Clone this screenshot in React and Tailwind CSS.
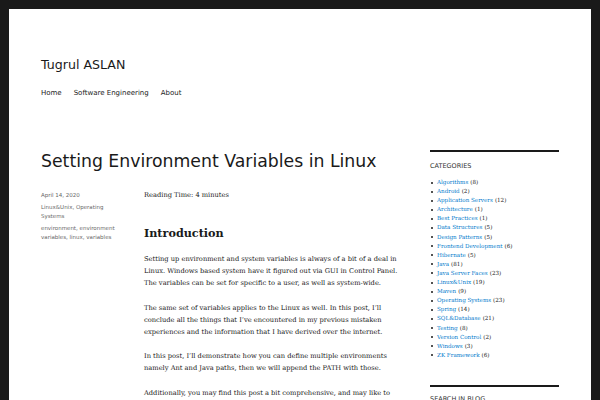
import React from 'react';

const categories = [
  ['Algorithms', 8],
  ['Android', 2],
  ['Application Servers', 12],
  ['Architecture', 1],
  ['Best Practices', 1],
  ['Data Structures', 5],
  ['Design Patterns', 5],
  ['Frontend Development', 6],
  ['Hibernate', 5],
  ['Java', 81],
  ['Java Server Faces', 23],
  ['Linux&Unix', 19],
  ['Maven', 9],
  ['Operating Systems', 23],
  ['Spring', 14],
  ['SQL&Database', 21],
  ['Testing', 8],
  ['Version Control', 2],
  ['Windows', 3],
  ['ZK Framework', 6],
];

// lines kept as in the original wrap
const paragraphs = [
  [
    'Setting up environment and system variables is always of a bit of a deal in',
    'Linux. Windows based system have it figured out via GUI in Control Panel.',
    'The variables can be set for specific to a user, as well as system-wide.',
  ],
  [
    'The same set of variables applies to the Linux as well. In this post, I\u2019ll',
    'conclude all the things that I\u2019ve encountered in my previous mistaken',
    'experiences and the information that I have derived over the internet.',
  ],
  [
    'In this post, I\u2019ll demonstrate how you can define multiple environments',
    'namely Ant and Java paths, then we will append the PATH with those.',
  ],
  ['Additionally, you may find this post a bit comprehensive, and may like to'],
];

const sans = "font-['DejaVu_Sans',sans-serif]";
const serif = "font-['DejaVu_Serif',serif]";

export default function App() {
  return (
    <div className="w-[600px] h-[400px] overflow-hidden bg-[#1a1a1a] pt-[9px] px-[9px]">
      <div className="bg-white h-[391px] px-[32px] overflow-hidden text-[#1a1a1a]">
        {/* Header */}
        <header className="pt-[46px]">
          <p className={`${sans} text-[12.6px] leading-[20px]`}>Tugrul ASLAN</p>
          <nav className={`${sans} mt-[12px] flex gap-[12px] text-[7px] leading-[12px]`}>
            <a>Home</a>
            <a>Software Engineering</a>
            <a>About</a>
          </nav>
        </header>

        <div className="flex mt-[51px]">
          {/* Post */}
          <main className="w-[362px]">
            <h1 className={`${sans} text-[17.3px] leading-[22px] whitespace-nowrap`}>
              Setting Environment Variables in Linux
            </h1>
            <div className="flex mt-[17px]">
              <div className={`${sans} w-[103px] pt-[1.5px] text-[5.5px] leading-[9px] text-[#686868]`}>
                <p className="mb-[3px]">April 14, 2020</p>
                <p className="mb-[3px] pr-[20px]">Linux&amp;Unix, Operating Systems</p>
                <p className="pr-[20px]">environment, environment variables, linux, variables</p>
              </div>
              <div className={`${serif} flex-1 text-[6.7px] leading-[12.2px] whitespace-nowrap text-[#1a1a1a]`}>
                <p className="leading-[12px]">Reading Time: 4 minutes</p>
                <h2 className="mt-[24px] text-[11.2px] leading-[16px] font-bold">Introduction</h2>
                <div className="mt-[12px] flex flex-col gap-[12px]">
                  {paragraphs.map((lines, i) => (
                    <p key={i}>
                      {lines.map((l, j) => (
                        <span key={j} className="block">{l}</span>
                      ))}
                    </p>
                  ))}
                </div>
              </div>
            </div>
          </main>

          {/* Sidebar */}
          <aside className="w-[129px] ml-auto">
            <section className="border-t-[2px] border-[#1a1a1a]">
              <h2 className={`${sans} mt-[9px] text-[6.5px] leading-[10px] uppercase text-[#333]`}>Categories</h2>
              <ul className={`${serif} mt-[7px] text-[5.6px] leading-[9.1px]`}>
                {categories.map(([name, n]) => (
                  <li key={name} className="flex items-center whitespace-nowrap">
                    <span className="w-[2px] h-[2px] rounded-full bg-[#1a1a1a] mr-[4px] ml-[1px]" />
                    <span className="text-[#007acc]">{name}</span>
                    <span className="ml-[2px]">({n})</span>
                  </li>
                ))}
              </ul>
            </section>
            <section className="mt-[25px] border-t-[2px] border-[#1a1a1a]">
              <h2 className={`${sans} mt-[7px] text-[6.5px] leading-[10px] uppercase text-[#333]`}>Search in Blog</h2>
            </section>
          </aside>
        </div>
      </div>
    </div>
  );
}
